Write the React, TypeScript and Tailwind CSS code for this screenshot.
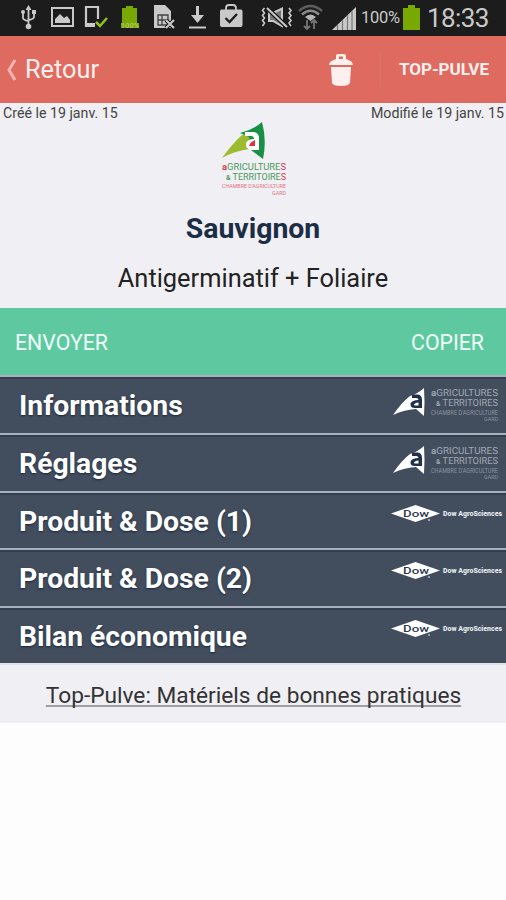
const AgriLogo = () => (
  <svg className="overflow-visible" width="66" height="76" viewBox="0 0 66 76" fontFamily="Roboto, sans-serif">
    <path d="M0 36 Q10 22 20 13 L33 12 L28 27 Q12 29 0 36 Z" fill="#9dbb2f" />
    <path d="M18 11 Q31 8 40 0 Q45 18 41 37 L29 28 L27 15 Z" fill="#179046" />
    <path d="M23 10 H32 Q37 11 37 16 V28 H29 Q23 27 24 21 Q26 17 32 17 Q32 14 29 14 H23 Z" fill="#fff" />
    <path d="M27 24 Q28 20 33 18 V24 Z" fill="#e2303c" />
    <g fontSize="9" fill="#4b9a60">
      <text x="0" y="48" textLength="64" lengthAdjust="spacingAndGlyphs">
        <tspan fill="#dc3b4d" fontWeight="700">a</tspan>GRICULTURE<tspan fill="#dc3b4d">S</tspan>
      </text>
      <text x="4" y="58" textLength="60" lengthAdjust="spacingAndGlyphs">
        <tspan fontSize="7" fontWeight="700">&amp;</tspan> TERRITOIRE<tspan fill="#dc3b4d">S</tspan>
      </text>
    </g>
    <g fontSize="6" fill="#e2737f">
      <text x="0" y="66" textLength="64" lengthAdjust="spacingAndGlyphs">CHAMBRE D'AGRICULTURE</text>
      <text x="50" y="72.500" textLength="14" lengthAdjust="spacingAndGlyphs">GARD</text>
    </g>
  </svg>
);

const AgriLogoWhite = () => (
  <svg className="overflow-visible" width="108" height="38" viewBox="0 0 108 38" fontFamily="Roboto, sans-serif">
    <path d="M1 28 Q10 15 18 9 Q27 6 32 1 Q33 14 32 29 L24 22 Q11 23 1 28 Z" fill="#fff" />
    <path d="M20 7.500 H26 Q30 8 30 13 V21 H23 Q18 21 18.500 16.500 Q20 13 26.500 13 Q26.500 11 24 11 H20 Z" fill="#22314b" />
    <path d="M22 18 Q22 16 26.500 15.500 V18.500 H23 Z" fill="#fff" />
    <g fill="#a0a8b3">
      <text x="39" y="9" fontSize="9.500" textLength="67" lengthAdjust="spacingAndGlyphs">
        <tspan fontWeight="700">a</tspan>GRICULTURES
      </text>
      <text x="44" y="19" fontSize="9.500" textLength="62" lengthAdjust="spacingAndGlyphs">
        <tspan fontSize="7" fontWeight="700">&amp;</tspan> TERRITOIRES
      </text>
      <g fill="#8993a1">
        <text x="39" y="27.500" fontSize="6.500" textLength="67" lengthAdjust="spacingAndGlyphs">CHAMBRE D'AGRICULTURE</text>
        <text x="92" y="34" fontSize="6" textLength="14" lengthAdjust="spacingAndGlyphs">GARD</text>
      </g>
    </g>
  </svg>
);

const DowLogo = () => (
  <svg width="114" height="20" viewBox="0 0 114 20" fontFamily="Roboto, sans-serif">
    <path d="M1 9.500 L25.500 1 L50 9.500 L25.500 18 Z" fill="#fff" />
    <text x="13" y="13" fontSize="9.500" fontWeight="500" fill="#2b3950" textLength="26" lengthAdjust="spacingAndGlyphs">Dow</text>
    <circle cx="39" cy="16" r="0.900" fill="#c5cbd3" />
    <text x="53" y="11.800" fontSize="7" fontWeight="900" fill="#e4e8ed" textLength="59" lengthAdjust="spacingAndGlyphs">Dow AgroSciences</text>
  </svg>
);

const StatusIcons = () => (
  <svg width="245" height="36" viewBox="0 0 245 36" fill="none" stroke="#c9c9c9" strokeWidth="1.800">
    {/* usb */}
    <path d="M28.500 9 V25 M23 13 V18 Q23 20 28.500 21 M34 13 V17 Q34 19 28.500 20" />
    <path d="M25.500 10 L28.500 5 L31.500 10 Z M32 10 H36 V14 H32 Z" fill="#c9c9c9" stroke="none" />
    <circle cx="23" cy="12" r="2" fill="#c9c9c9" stroke="none" />
    <circle cx="28.500" cy="26.500" r="2.800" fill="#c9c9c9" stroke="none" />
    {/* picture */}
    <path d="M52 8 H73 V26 H52 Z" strokeWidth="2" />
    <path d="M55 23 V19 L60 14 L64 18 L67 16 L70 20 V23 Z" fill="#c9c9c9" stroke="none" />
    {/* phone */}
    <path d="M94 26 H86 V7 H98 V19" strokeWidth="2.200" />
    <path d="M86 23 H95 V27 H86 Z" fill="#c9c9c9" stroke="none" />
    <path d="M96 22 L100 26 L107 18" stroke="#8fc51b" strokeWidth="2.500" />
    {/* battery */}
    <path d="M122 8 H126 V6 H133 V8 H137 V23 H139 V28 H121 V23 H122 Z" fill="#78a900" stroke="none" />
    <text x="121" y="28" fontSize="6.500" fontFamily="Roboto, sans-serif" fontWeight="700" fill="#a9c667" stroke="none" textLength="18" lengthAdjust="spacingAndGlyphs">100%</text>
    {/* sim card */}
    <path d="M154 5 H165 L171 11 V28 H154 Z" fill="#c9c9c9" stroke="none" />
    <path d="M158 15 H168 V25 H158 Z M158 20 H168 M162 15 V25" stroke="#444" strokeWidth="1.300" />
    <path d="M166 20 L174 28 M174 20 L166 28" stroke="#1c1c1c" strokeWidth="4" />
    <path d="M166 20 L174 28 M174 20 L166 28" strokeWidth="2" />
    {/* download */}
    <path d="M197.500 6 V18" strokeWidth="3" />
    <path d="M191 15 L197.500 23 L204 15 Z" fill="#c9c9c9" stroke="none" />
    <path d="M189 27.500 H206" strokeWidth="2" />
    {/* store bag */}
    <path d="M226 10 V8 Q226 5 229 5 H233 Q236 5 236 8 V10" />
    <path d="M221 9.500 H241.500 L242.500 11 V25 Q242.500 27 240.500 27 H222 Q220 27 220 25 V11 Z" fill="#c9c9c9" stroke="none" />
    <path d="M225.500 18 L229.500 22 L237 14" stroke="#1c1c1c" strokeWidth="2.300" />
  </svg>
);

const SignalIcons = () => (
  <svg width="98" height="36" viewBox="260 0 98 36" fill="none" stroke="#c9c9c9">
    {/* vibrate + mute */}
    <path d="M264.500 8 l-2 2.500 2 2.500 -2 2.500 2 2.500 -2 2.500 2 2.500 -2 3 M289 8 l2 2.500 -2 2.500 2 2.500 -2 2.500 2 2.500 -2 2.500 2 3" strokeWidth="1.600" />
    <path d="M269 13 H273 L282 8.500 V26 L273 21 H269 Z" strokeWidth="2" fill="#777" />
    <path d="M267 8 L287 27" stroke="#1c1c1c" strokeWidth="4.500" />
    <path d="M267 8 L287 27" strokeWidth="2" />
    {/* wifi */}
    <path d="M299 11 Q310.500 1 322 11" stroke="#5e5e5e" strokeWidth="2.500" />
    <path d="M302 14.500 Q310.500 7 319 14.500" stroke="#8a8a8a" strokeWidth="2.500" />
    <path d="M305 17 Q310.500 12 316 17 L310.500 21 Z" fill="#b5b5b5" stroke="none" />
    <path d="M307 29 V20 M304 26 L307 29 L310 26 M314 20 V29 M311 23 L314 20 L317 23" stroke="#777" strokeWidth="1.800" />
    {/* signal */}
    <path d="M332 30 L356 7 V30 Z" fill="#c9c9c9" stroke="none" />
    <path d="M337.500 25 V30 M342.500 20 V30 M347.500 15 V30 M352 11 V30" stroke="#777" strokeWidth="1.200" />
  </svg>
);

const rows = [
  { label: "Informations", logo: "agri", height: "h-[58px]" },
  { label: "Réglages", logo: "agri", height: "h-[58px]" },
  { label: "Produit & Dose (1)", logo: "dow", height: "h-[57px]" },
  { label: "Produit & Dose (2)", logo: "dow", height: "h-[58px]" },
  { label: "Bilan économique", logo: "dow", height: "h-[57px]" },
];

const App = () => {
  return (
    <div className="flex h-[900px] w-[506px] flex-col overflow-hidden bg-[#fdfdfd] font-['Roboto',sans-serif]">
      {/* Status bar */}
      <div className="flex h-9 shrink-0 items-center bg-[#1c1c1c] text-[#c9c9c9]">
        <StatusIcons />
        <div className="ml-[15px] flex items-center">
          <SignalIcons />
          <span className="ml-[3px] w-[39px] whitespace-nowrap text-[16.500px] tracking-[-0.3px]">100%</span>
          <svg className="ml-[2px]" width="20" height="36" viewBox="0 0 20 36">
            <path d="M1 8 H6 V5 H13 V8 H18 V30 H1 Z" fill="#78a900" />
          </svg>
          <span className="ml-[5px] whitespace-nowrap text-[26px] leading-9 tracking-[-0.6px]">18:33</span>
        </div>
      </div>

      {/* Header */}
      <header className="flex h-[67px] shrink-0 items-center bg-[#df6a60] text-[#fff0ee]">
        <svg className="ml-[6px]" width="11" height="24" viewBox="0 0 11 24">
          <path d="M9 2 L3 12 L9 22" fill="none" stroke="#f5b5b0" strokeWidth="3" />
        </svg>
        <span className="ml-[8px] pt-px text-[25.300px] leading-8">Retour</span>
        <div className="ml-auto flex items-center pr-[17px]">
          <svg width="26" height="36" viewBox="0 0 26 36" fill="#fff0ee">
            <path d="M8 7 V4 Q8 2 10 2 H16 Q18 2 18 4 V7 Q25 9 25 13 H1 Q1 9 8 7 Z M11 4.500 V7 H15 V4.500 Z" fillRule="evenodd" />
            <path d="M3 15 H23 L22 31 Q21 34 13 34 Q5 34 4 31 Z" />
          </svg>
          <div className="ml-[26px] h-[34px] w-px bg-[#d6776f]"></div>
          <span className="ml-[18px] pt-px text-[17px] font-bold">TOP-PULVE</span>
        </div>
      </header>

      {/* Program info */}
      <section className="flex h-[205px] shrink-0 flex-col items-center bg-[#f0eff4]">
        <div className="flex h-[19px] w-full justify-between pl-[3px] pr-[2px] text-[14.200px] leading-5 text-[#444]">
          <span>Créé le 19 janv. 15</span>
          <span>Modifié le 19 janv. 15</span>
        </div>
        <div className="pl-[3px]">
          <AgriLogo />
        </div>
        <h1 className="mt-[13px] text-[28.400px] font-bold leading-9 text-[#1c2e45]">Sauvignon</h1>
        <p className="mt-[13px] text-[25.400px] leading-9 text-[#222]">Antigerminatif + Foliaire</p>
      </section>

      {/* Actions */}
      <div className="flex h-[67px] shrink-0 items-center justify-between bg-[#5ec9a0] pl-[15px] pr-[22px] pt-[2px] text-[21.300px] text-[#effff8]">
        <span>ENVOYER</span>
        <span>COPIER</span>
      </div>

      {rows.map((row) => (
        <div
          key={row.label}
          className={`${row.height} flex shrink-0 items-center justify-between border-t-2 border-[#a7b0bb] bg-[#424d5d] pl-[19px] shadow-[inset_0_2px_0_#333f50]`}
        >
          <span className="pt-[2px] text-[28.300px] font-bold leading-8 text-white [text-shadow:0_1px_2px_#18263d]">{row.label}</span>
          <div className={row.logo === "agri" ? "mr-[6px] self-start pt-[10px]" : "mr-[2px] self-start pt-[11px]"}>
            {row.logo === "agri" ? <AgriLogoWhite /> : <DowLogo />}
          </div>
        </div>
      ))}

      {/* Footer link */}
      <div className="flex h-[60px] shrink-0 items-center justify-center border-t-2 border-[#dfe1e7] bg-[#f0eff4]">
        <a className="pl-px pt-[3px] text-[22.700px] leading-[24px] text-[#333] underline decoration-[#a0a0a3] decoration-2 underline-offset-[2px] [text-decoration-skip-ink:none]">
          Top-Pulve: Matériels de bonnes pratiques
        </a>
      </div>
    </div>
  );
};

export default App;
